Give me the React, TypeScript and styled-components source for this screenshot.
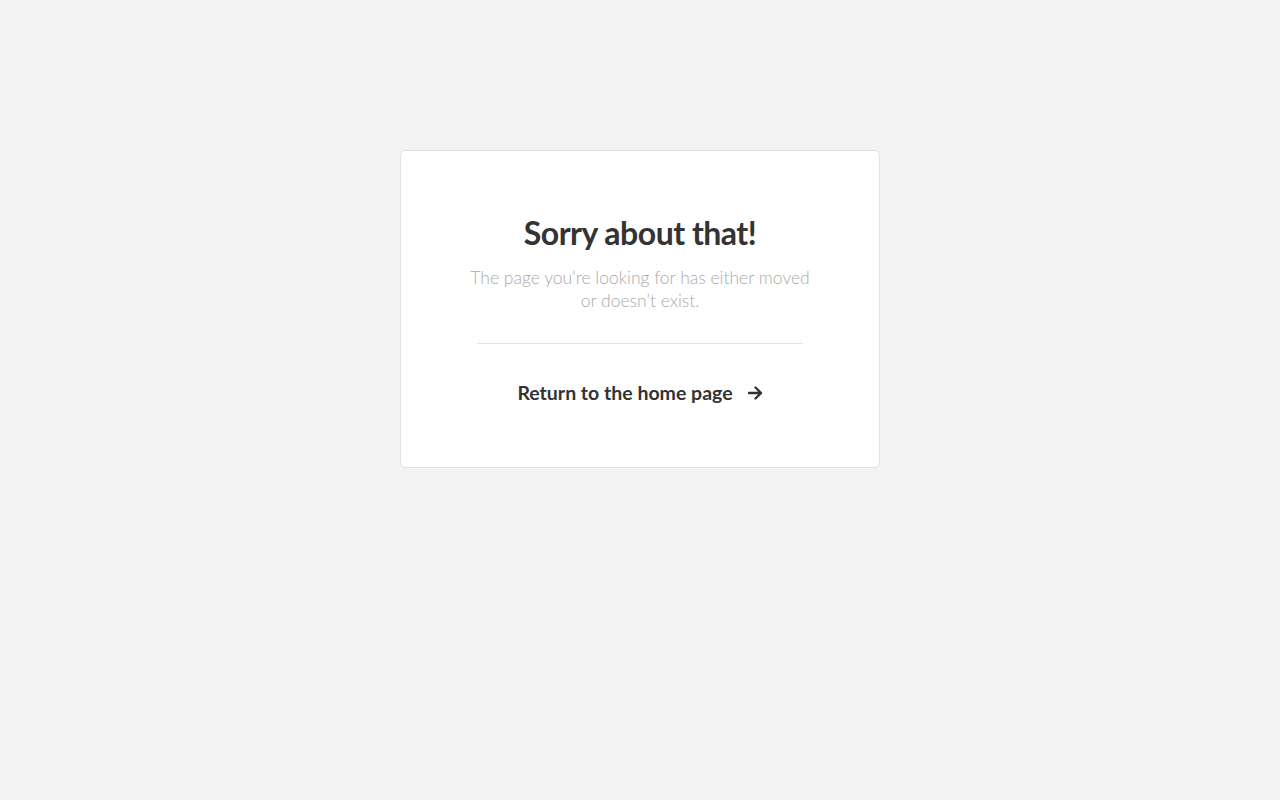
import styled, { createGlobalStyle } from 'styled-components';

const GlobalStyle = createGlobalStyle`
  html, body {
    margin: 0;
    padding: 0;
    background: #f3f3f3;
    font-family: Lato, "Noto Sans", sans-serif;
  }
`;

const Page = styled.div`
  min-height: 800px;
  display: flex;
  justify-content: center;
  align-items: flex-start;
  padding-top: 150px;
  box-sizing: border-box;
`;

const Card = styled.div`
  width: 480px;
  box-sizing: border-box;
  background: #fff;
  border: 1px solid #e3e3e3;
  border-radius: 6px;
  padding: 62px 76px 61px;
  display: flex;
  flex-direction: column;
  align-items: center;
  text-align: center;
`;

const Title = styled.h1`
  margin: 0;
  font-size: 32px;
  line-height: 40px;
  font-weight: 700;
  color: #333;
  letter-spacing: -0.5px;
`;

const Message = styled.p`
  margin: 13px 0 0;
  width: 345px;
  font-size: 17.5px;
  line-height: 23px;
  font-weight: 300;
  color: #a9a9a9;
`;

const Divider = styled.hr`
  width: 100%;
  margin: 31px 0 0;
  border: 0;
  border-top: 1px solid #e5e5e5;
`;

const HomeLink = styled.a`
  margin-top: 36px;
  display: flex;
  align-items: center;
  gap: 14px;
  font-size: 19.5px;
  line-height: 26px;
  font-weight: 700;
  color: #333;
  text-decoration: none;
`;

const Arrow = () => (
  <svg width="16" height="14" viewBox="0 0 16 14" fill="none" stroke="#333" strokeWidth="2.4" strokeLinecap="round" strokeLinejoin="round">
    <path d="M2 7h12M8.5 1.5 14 7l-5.5 5.5" />
  </svg>
);

export default function App() {
  return (
    <>
      <GlobalStyle />
      <Page>
        <Card>
          <Title>Sorry about that!</Title>
          <Message>The page you’re looking for has either moved or doesn’t exist.</Message>
          <Divider />
          <HomeLink href="#">
            Return to the home page
            <Arrow />
          </HomeLink>
        </Card>
      </Page>
    </>
  );
}
